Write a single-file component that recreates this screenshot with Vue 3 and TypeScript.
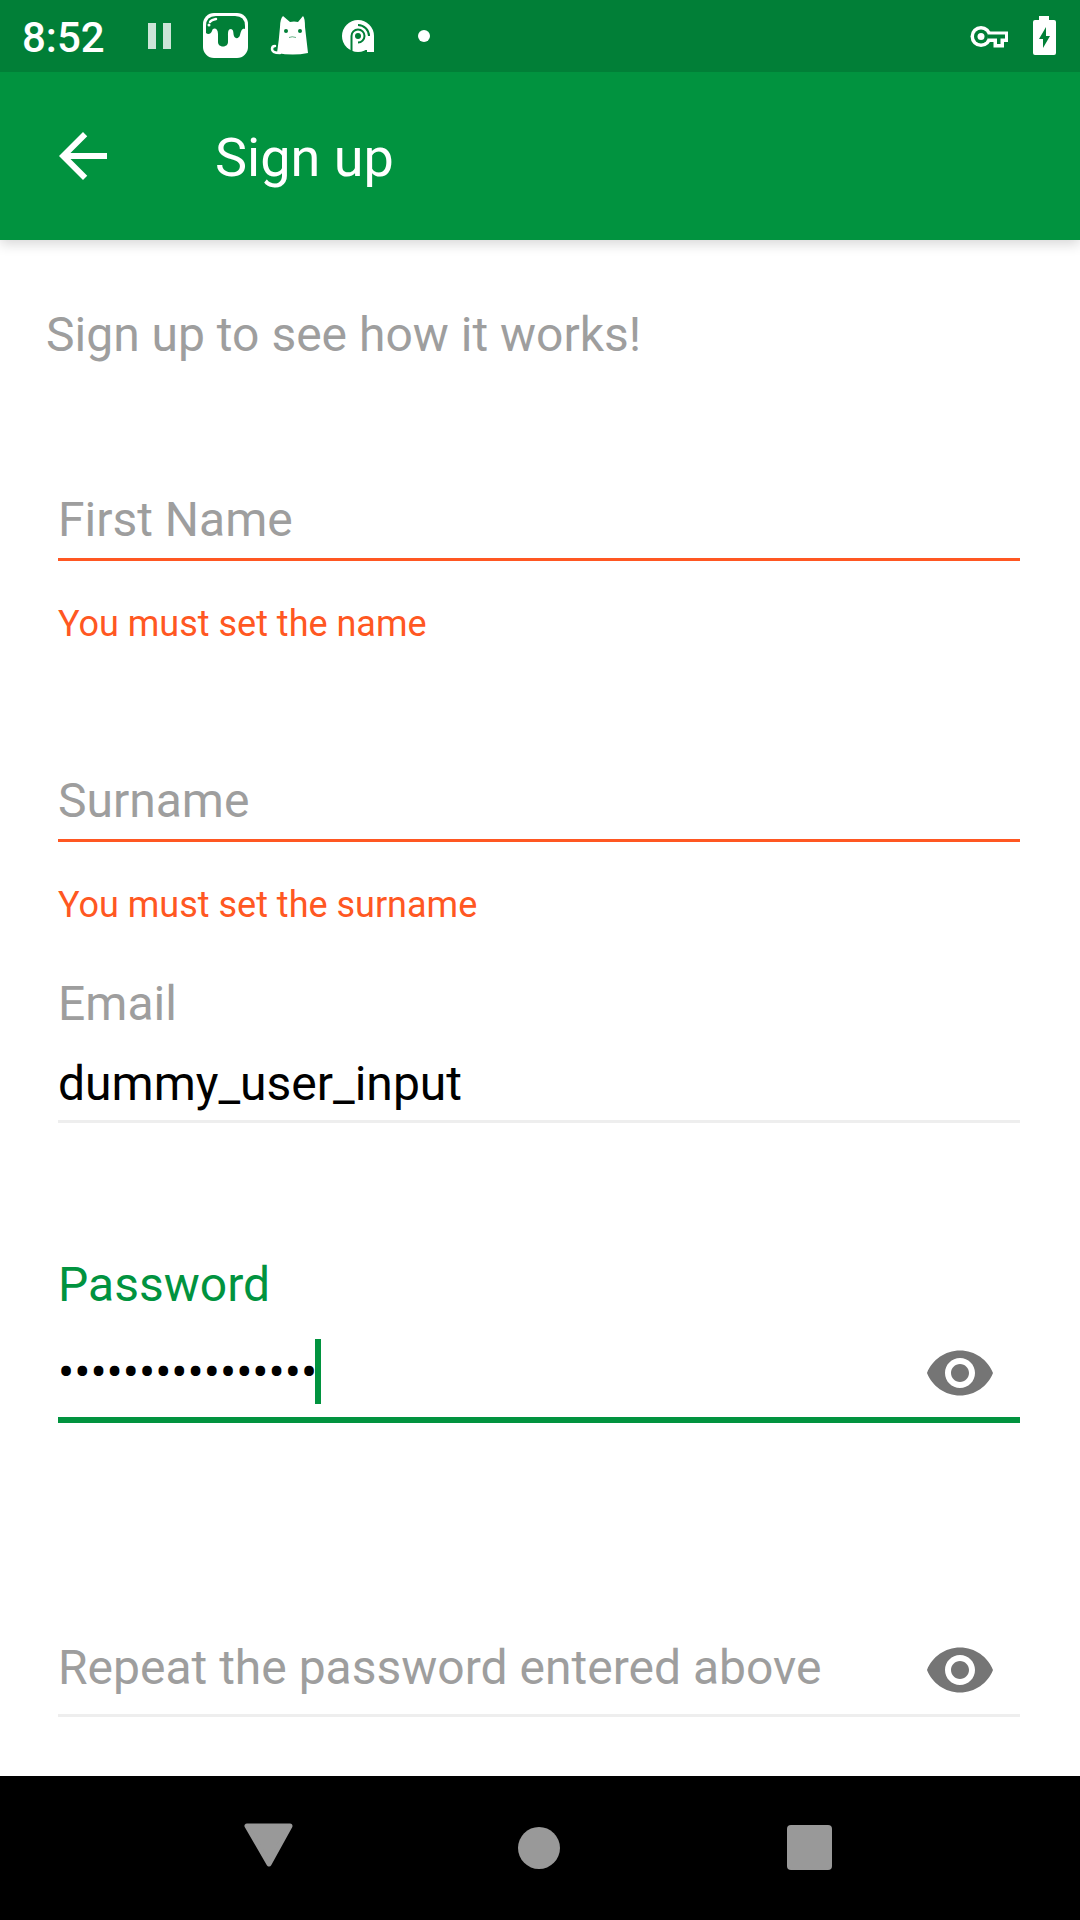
<script setup lang="ts">
import { reactive, ref } from 'vue'

interface Field {
  id: string
  label: string
  type: 'text' | 'email' | 'password'
  value: string
  error?: string
}

const fields = reactive<Field[]>([
  { id: 'first-name', label: 'First Name', type: 'text', value: '', error: 'You must set the name' },
  { id: 'surname', label: 'Surname', type: 'text', value: '', error: 'You must set the surname' },
  { id: 'email', label: 'Email', type: 'text', value: 'dummy_user_input' },
  { id: 'password', label: 'Password', type: 'password', value: 'dummy_user_input' },
  { id: 'repeat', label: 'Repeat the password entered above', type: 'password', value: '' },
])

const activeId = ref('password')
const revealed = reactive<Record<string, boolean>>({})

function inputType(field: Field): string {
  return revealed[field.id] ? 'text' : field.type
}
</script>

<template>
  <div class="screen">
    <div class="status">
      <span class="clock">8:52</span>
      <svg class="cell" viewBox="0 0 66 72" aria-hidden="true">
        <path d="M22 23h8v26h-8zM37 23h8v26h-8z" fill="#fff" opacity=".8" />
      </svg>
      <svg class="cell" viewBox="0 0 66 72" aria-hidden="true">
        <rect x="11" y="13" width="45" height="45" rx="11" fill="#fff" />
        <path
          d="M14 33V26Q14 16 24 16H43Q53 16 53 26V29C50 28 49 31 48 35C47 39 43 39 42 36C41 33 42 30 39 29C36 29 36 32 36 36V42C36 48 26 48 26 42V34C26 28 21 27 20 31C19 34 16 35 14 33Z"
          fill="#017f37"
        />
        <path d="M18 22Q19 20 24 19" fill="none" stroke="#fff" stroke-width="2.5" stroke-linecap="round" />
        <circle cx="17" cy="25" r="1.5" fill="#fff" />
      </svg>
      <svg class="cell" viewBox="0 0 66 72" aria-hidden="true">
        <path
          d="M25 16L32 22Q36 21 40 22L45 16Q47 18 47 27L50 53Q35 56 19 53Q21 40 22 27Q22 19 25 16Z"
          fill="#fff"
        />
        <path d="M22 53Q14 53 14 49Q14 46 17 46" fill="none" stroke="#fff" stroke-width="2.5" stroke-linecap="round" />
        <circle cx="28" cy="31" r="2" fill="#017f37" />
        <circle cx="42" cy="31" r="2" fill="#017f37" />
        <path d="M31 37.5Q34 36 38 37.5" fill="none" stroke="#017f37" stroke-width="1" opacity=".6" />
      </svg>
      <svg class="cell" viewBox="0 0 66 72" aria-hidden="true">
        <circle cx="34" cy="36" r="16" fill="#fff" />
        <path d="M34 36H50V52H43V50H34Z" fill="#fff" />
        <path d="M27.5 52V36A6.5 6.5 0 1 1 34 42.5" fill="none" stroke="#017f37" stroke-width="2" />
        <path d="M34 25A11 11 0 0 1 45 36" fill="none" stroke="#017f37" stroke-width="2" />
        <circle cx="34" cy="36" r="3" fill="#017f37" />
      </svg>
      <svg class="cell" viewBox="0 0 66 72" aria-hidden="true">
        <circle cx="34" cy="36" r="6" fill="#fff" />
      </svg>
      <span class="spacer"></span>
      <svg class="system" viewBox="0 0 60 72" aria-hidden="true">
        <path
          d="M29.500 31.500H48V42H44V47.500H33.500V42H29.500"
          fill="#fff"
        />
        <circle cx="21" cy="36.500" r="10.500" fill="#fff" />
        <path d="M27.500 34.500H45V38.500H40.500V44H37V38.500H27.500Z" fill="#017f37" />
        <circle cx="21" cy="36.500" r="7" fill="#017f37" />
        <circle cx="21" cy="36.500" r="3.500" fill="#fff" />
      </svg>
      <svg class="system" viewBox="0 0 60 72" aria-hidden="true">
        <path
          d="M19 16h10v4h5q2 0 2 2v31q0 2-2 2H15q-2 0-2-2V22q0-2 2-2h4z"
          fill="#fff"
        />
        <path d="M26 27V36H30L23 48V39H19Z" fill="#017f37" />
      </svg>
    </div>

    <header class="appbar">
      <button class="icon-button" type="button" aria-label="Back">
        <svg viewBox="0 0 24 24" width="72" height="72">
          <path d="M20 11H7.830l5.590-5.590L12 4l-8 8 8 8 1.410-1.410L7.830 13H20v-2z" fill="#fff" />
        </svg>
      </button>
      <h1 class="title">Sign up</h1>
    </header>

    <main class="content">
      <p class="intro">Sign up to see how it works!</p>
      <form class="form" @submit.prevent>
        <div
          v-for="field in fields"
          :key="field.id"
          class="field"
          :class="{
            resting: !field.value && activeId !== field.id,
            invalid: field.error,
            active: activeId === field.id,
          }"
        >
          <label class="label" :for="field.id">{{ field.label }}</label>
          <div class="control" :class="{ tall: field.type === 'password' }">
            <div class="entry">
              <input
                :id="field.id"
                v-model="field.value"
                class="input"
                :type="inputType(field)"
                :aria-invalid="!!field.error"
                autocomplete="off"
                @focus="activeId = field.id"
              />
              <span v-if="activeId === field.id" class="caret"></span>
            </div>
            <button
              v-if="field.type === 'password'"
              class="icon-button"
              type="button"
              aria-label="Show password"
              @click="revealed[field.id] = !revealed[field.id]"
            >
              <svg viewBox="0 0 24 24" width="72" height="72">
                <path
                  d="M12 4.500C7 4.500 2.730 7.610 1 12c1.730 4.390 6 7.500 11 7.500s9.270-3.110 11-7.500c-1.730-4.390-6-7.500-11-7.500zM12 17c-2.760 0-5-2.240-5-5s2.240-5 5-5 5 2.240 5 5-2.240 5-5 5zm0-8c-1.660 0-3 1.340-3 3s1.340 3 3 3 3-1.340 3-3-1.340-3-3-3z"
                  fill="#757575"
                />
              </svg>
            </button>
          </div>
          <p class="support">{{ field.error }}</p>
        </div>
      </form>
    </main>

    <nav class="navbar">
      <button type="button" aria-label="Back">
        <svg viewBox="0 0 72 72" width="72" height="72">
          <path d="M13 14H56L35 52Z" fill="#999" stroke="#999" stroke-width="5" stroke-linejoin="round" />
        </svg>
      </button>
      <button type="button" aria-label="Home">
        <svg viewBox="0 0 72 72" width="72" height="72"><circle cx="35" cy="36" r="21" fill="#999" /></svg>
      </button>
      <button type="button" aria-label="Recent apps">
        <svg viewBox="0 0 72 72" width="72" height="72"><rect x="13" y="13" width="45" height="45" rx="4" fill="#999" /></svg>
      </button>
    </nav>
  </div>
</template>

<style>
body {
  margin: 0;
  background: #fff;
}
</style>

<style scoped>
.screen {
  display: flex;
  flex-direction: column;
  min-height: 100vh;
  background: #fff;
  font-family: Roboto, 'Noto Sans', sans-serif;
  font-size: 48px;
  line-height: 56px;
}

button {
  display: flex;
  align-items: center;
  justify-content: center;
  margin: 0;
  padding: 0;
  border: 0;
  background: none;
  cursor: pointer;
}

h1,
p {
  margin: 0;
  font-weight: 400;
}

svg {
  display: block;
}

.status {
  position: relative;
  z-index: 1;
  display: flex;
  align-items: center;
  height: 72px;
  background: #017f37;
  color: #fff;
}

.clock {
  box-sizing: border-box;
  width: 126px;
  padding: 4px 0 0 22px;
  font-size: 42px;
  font-weight: 500;
}

.cell {
  width: 66px;
  height: 72px;
}

.spacer {
  flex: 1;
}

.system {
  width: 60px;
  height: 72px;
}

.appbar {
  display: flex;
  align-items: center;
  gap: 96px;
  height: 168px;
  padding-left: 47px;
  background: #01933f;
  box-shadow: 0 4px 12px rgba(0, 0, 0, 0.16);
  color: #fff;
}

.icon-button {
  flex: none;
  width: 72px;
  height: 72px;
}

.title {
  padding-top: 4px;
  font-size: 54px;
  line-height: 64px;
}

.content {
  flex: 1;
  padding: 67px 60px 56px 58px;
}

.intro {
  margin-left: -12px;
  color: #9e9e9e;
}

.form {
  padding-top: 51px;
}

.field {
  display: grid;
  grid-template-columns: minmax(0, 1fr);
  grid-template-rows: 80px auto auto;
}

.label {
  grid-area: 1 / 1;
  color: #9e9e9e;
}

.active .label {
  color: #01933f;
}

.resting .label {
  grid-area: 2 / 1;
  align-self: center;
  padding-bottom: 15px;
  line-height: 52px;
  pointer-events: none;
}

.control {
  grid-area: 2 / 1;
  display: flex;
  align-items: center;
  height: 56px;
  padding: 0 24px 8px 0;
  border-bottom: 3px solid #eee;
}

.control.tall {
  height: 72px;
}

.invalid .control {
  border-color: #ff5722;
}

.active .control {
  border-color: #01933f;
  box-shadow: 0 3px 0 #01933f;
}

.entry {
  display: flex;
  align-items: center;
  flex: 1;
  min-width: 0;
}

.input {
  box-sizing: border-box;
  flex: 1;
  min-width: 0;
  height: 56px;
  margin: 0;
  padding: 0;
  border: 0;
  outline: none;
  background: none;
  color: #000;
  font: inherit;
}

.active .input {
  flex: none;
  field-sizing: content;
  caret-color: transparent;
}

.caret {
  width: 6px;
  height: 65px;
  margin: 0 0 4px -2px;
  background: #01933f;
}

.support {
  grid-row: 3;
  box-sizing: border-box;
  height: 134px;
  padding-top: 41px;
  color: #ff5722;
  font-size: 36px;
  line-height: 44px;
}

.field:last-child .support {
  display: none;
}

.navbar {
  display: flex;
  flex: none;
  height: 144px;
  padding: 0 12.5%;
  background: #000;
}

.navbar button {
  flex: 1;
}
</style>
